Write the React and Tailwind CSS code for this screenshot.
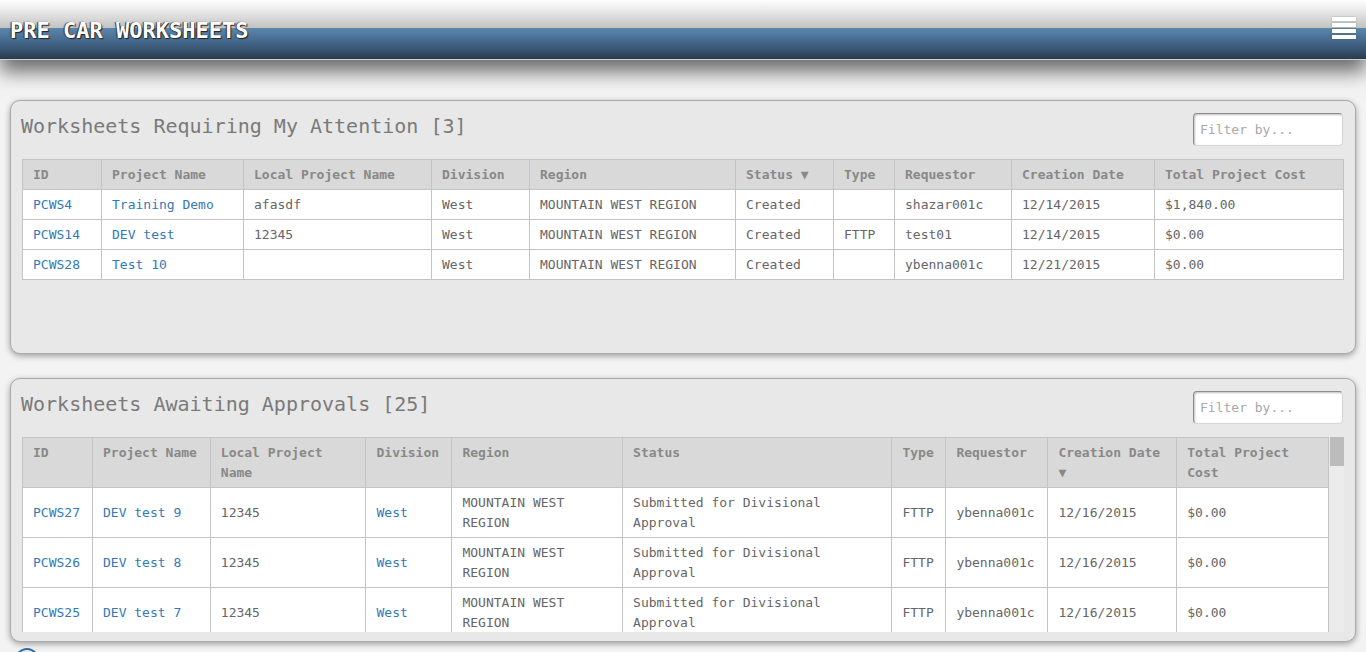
import React from 'react';

const mono = "font-['DejaVu_Sans_Mono','Liberation_Mono',monospace]";

const attentionCols = [
  { label: 'ID', w: 79 },
  { label: 'Project Name', w: 142 },
  { label: 'Local Project Name', w: 188 },
  { label: 'Division', w: 98 },
  { label: 'Region', w: 206 },
  { label: 'Status ▼', w: 98 },
  { label: 'Type', w: 61 },
  { label: 'Requestor', w: 117 },
  { label: 'Creation Date', w: 143 },
  { label: 'Total Project Cost', w: 189 },
];

const attentionRows = [
  ['PCWS4', 'Training Demo', 'afasdf', 'West', 'MOUNTAIN WEST REGION', 'Created', '', 'shazar001c', '12/14/2015', '$1,840.00'],
  ['PCWS14', 'DEV test', '12345', 'West', 'MOUNTAIN WEST REGION', 'Created', 'FTTP', 'test01', '12/14/2015', '$0.00'],
  ['PCWS28', 'Test 10', '', 'West', 'MOUNTAIN WEST REGION', 'Created', '', 'ybenna001c', '12/21/2015', '$0.00'],
];

const approvalCols = [
  { label: 'ID', w: 70 },
  { label: 'Project Name', w: 118 },
  { label: 'Local Project Name', w: 156 },
  { label: 'Division', w: 86 },
  { label: 'Region', w: 171 },
  { label: 'Status', w: 270 },
  { label: 'Type', w: 54 },
  { label: 'Requestor', w: 102 },
  { label: 'Creation Date ▼', w: 129 },
  { label: 'Total Project Cost', w: 152 },
];

const approvalRows = [
  ['PCWS27', 'DEV test 9'],
  ['PCWS26', 'DEV test 8'],
  ['PCWS25', 'DEV test 7'],
].map(([id, name]) => [id, name, '12345', 'West', 'MOUNTAIN WEST REGION', 'Submitted for Divisional Approval', 'FTTP', 'ybenna001c', '12/16/2015', '$0.00']);

const FilterBox = () => (
  <input
    type="text"
    placeholder="Filter by..."
    className={`${mono} w-[150px] h-[33px] rounded-[4px] bg-white border border-[#d6d6d6] border-t-[#8c8c8c] border-l-[#8c8c8c] shadow-[inset_1px_1px_2px_rgba(0,0,0,0.25)] px-[6px] text-[13px] text-[#555] placeholder:text-[#a8a8a8] outline-none`}
  />
);

const DataTable = ({ cols, rows, linkCols }) => (
  <table className={`${mono} table-fixed border-collapse text-[13px] leading-[20px]`}>
    <colgroup>
      {cols.map((c) => (
        <col key={c.label} style={{ width: c.w }} />
      ))}
    </colgroup>
    <thead>
      <tr className="bg-[#d9d9d9]">
        {cols.map((c) => (
          <th
            key={c.label}
            className="border border-[#c4c4c4] px-[10px] pt-[5px] pb-[4px] text-left align-top font-bold text-[#888]"
          >
            {c.label}
          </th>
        ))}
      </tr>
    </thead>
    <tbody>
      {rows.map((r) => (
        <tr key={r[0]} className="bg-white">
          {r.map((v, i) => (
            <td
              key={i}
              className={`border border-[#c4c4c4] px-[10px] pt-[5px] pb-[4px] align-middle ${
                linkCols.includes(i) ? 'text-[#337ab7]' : 'text-[#666]'
              }`}
            >
              {v}
            </td>
          ))}
        </tr>
      ))}
    </tbody>
  </table>
);

const Panel = ({ title, height, bodyHeight, scroll, children }) => (
  <section
    className="mx-[10px] rounded-[10px] border border-[#a9a9a9] bg-[#e8e8e8] shadow-[0_2px_6px_rgba(0,0,0,0.35)] pl-[11px] pr-[11px] pt-[12px]"
    style={{ height }}
  >
    <div className="flex items-start justify-between pr-[1px]">
      <h2 className={`${mono} -ml-[1px] pt-[1px] text-[20px] leading-[24px] text-[#7a7a7a]`}>{title}</h2>
      <FilterBox />
    </div>
    <div className="mt-[13px] flex" style={{ height: bodyHeight }}>
      <div className="flex-1 overflow-hidden">{children}</div>
      {scroll && (
        <div className="w-[15px] bg-[#ececec] pl-[1px]">
          <div className="h-[29px] bg-[#bcbcbc]" />
        </div>
      )}
    </div>
  </section>
);

export default function App() {
  return (
    <div className="min-h-[652px] bg-[#f3f3f3] overflow-hidden">
      <header className="h-[60px] bg-[linear-gradient(to_bottom,#ffffff_0px,#e2e2e2_14px,#c2c2c2_28px,#5b87ad_28px,#43678a_42px,#293b4d_59px,#d0d0d0_59px,#d0d0d0_60px)] shadow-[0_12px_18px_rgba(0,0,0,0.55)] flex items-start justify-between pl-[10px] pr-[10px] pt-[16px]">
        <h1 className={`${mono} pt-[2px] text-[22px] leading-[26px] font-bold text-white [text-shadow:1px_1px_1px_#222,-1px_0_1px_#333]`}>
          PRE CAR WORKSHEETS
        </h1>
        <div className="flex flex-col gap-[2px] pt-[1px]">
          {[0, 1, 2, 3].map((i) => (
            <span key={i} className="block w-[24px] h-[4px] bg-white shadow-[0_0_1px_#333]" />
          ))}
        </div>
      </header>

      <main className="pt-[40px] flex flex-col gap-[24px]">
        <Panel title="Worksheets Requiring My Attention [3]" height={254} bodyHeight={183}>
          <DataTable cols={attentionCols} rows={attentionRows} linkCols={[0, 1]} />
        </Panel>
        <Panel title="Worksheets Awaiting Approvals [25]" height={264} bodyHeight={195} scroll>
          <DataTable cols={approvalCols} rows={approvalRows} linkCols={[0, 1, 3]} />
        </Panel>
      </main>

      <div className="pl-[15px] pt-[6px]">
        <div className="w-[24px] h-[24px] rounded-full border-2 border-[#2d6fa8] bg-[#f3f3f3]" />
      </div>
    </div>
  );
}
